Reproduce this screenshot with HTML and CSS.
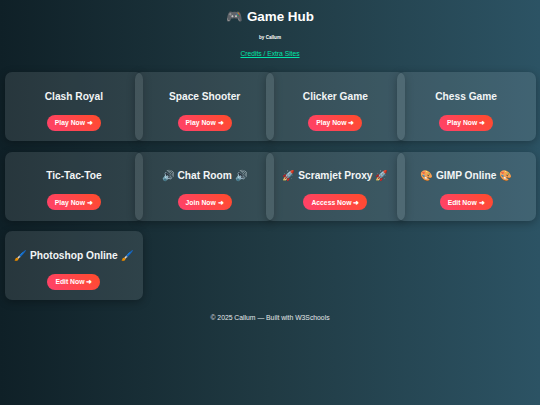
FILE: index.html
```html
<!DOCTYPE html>
<html lang="en">

<head>
    <meta charset="UTF-8">
    <title>Game Hub</title>
    <link rel="stylesheet" href="styles.css">
</head>

<body>
    <header class="top">
        <h1>🎮 Game Hub</h1>
        <p class="by">by Callum</p>
        <a class="credits" href="#">Credits / Extra Sites</a>
    </header>

    <div class="grid">
        <div class="card">
            <h2>Clash Royal</h2>
            <a class="btn" href="#">Play Now ➜</a>
        </div>
        <div class="card">
            <h2>Space Shooter</h2>
            <a class="btn" href="#">Play Now ➜</a>
        </div>
        <div class="card">
            <h2>Clicker Game</h2>
            <a class="btn" href="#">Play Now ➜</a>
        </div>
        <div class="card">
            <h2>Chess Game</h2>
            <a class="btn" href="#">Play Now ➜</a>
        </div>
        <div class="card">
            <h2>Tic-Tac-Toe</h2>
            <a class="btn" href="#">Play Now ➜</a>
        </div>
        <div class="card">
            <h2>🔊 Chat Room 🔊</h2>
            <a class="btn" href="#">Join Now ➜</a>
        </div>
        <div class="card">
            <h2>🚀 Scramjet Proxy 🚀</h2>
            <a class="btn" href="#">Access Now ➜</a>
        </div>
        <div class="card">
            <h2>🎨 GIMP Online 🎨</h2>
            <a class="btn" href="#">Edit Now ➜</a>
        </div>
        <div class="card">
            <h2>🖌️ Photoshop Online 🖌️</h2>
            <a class="btn" href="#">Edit Now ➜</a>
        </div>
    </div>

    <footer class="foot">© 2025 Callum — Built with W3Schools</footer>
</body>

</html>
```

FILE: styles.css
```css
* {
    box-sizing: border-box;
    margin: 0;
    padding: 0;
}

body {
    min-height: 405px;
    overflow: hidden;
    padding-top: 8px;
    font-family: "Liberation Sans", Arial, sans-serif;
    color: #fff;
    background: linear-gradient(90deg, #0f2027, #203a43, #2c5364);
}

.top {
    text-align: center;
}

.top h1 {
    font-size: 13.4px;
    line-height: 17px;
}

.top .by {
    margin-top: 10px;
    font-size: 4.6px;
    font-weight: bold;
    line-height: 5px;
}

.credits {
    display: block;
    margin-top: 10px;
    font-size: 6.7px;
    line-height: 8px;
    color: #00e6a8;
}

.grid {
    display: grid;
    grid-template-columns: repeat(4, 1fr);
    gap: 10.7px 0;
    margin-top: 14px;
    padding: 0 8.5px;
}

.card {
    display: flex;
    flex-direction: column;
    align-items: center;
    height: 69px;
    margin: 0 -4px;
    padding-top: 17.5px;
    border-radius: 7px;
    background: rgba(255, 255, 255, 0.1);
    box-shadow: 0 2px 8px rgba(0, 0, 0, 0.3);
}

.card h2 {
    font-size: 10.2px;
    line-height: 14px;
    white-space: nowrap;
    color: #f2f5f6;
}

.btn {
    margin-top: 11px;
    padding: 3.5px 8px;
    border-radius: 12px;
    font-size: 6.8px;
    font-weight: bold;
    line-height: 9px;
    color: #fff;
    text-decoration: none;
    background: linear-gradient(45deg, #ff416c, #ff4b2b);
}

.foot {
    margin-top: 12.5px;
    text-align: center;
    font-size: 6.8px;
    line-height: 9px;
    color: #e4e8ea;
}
```
